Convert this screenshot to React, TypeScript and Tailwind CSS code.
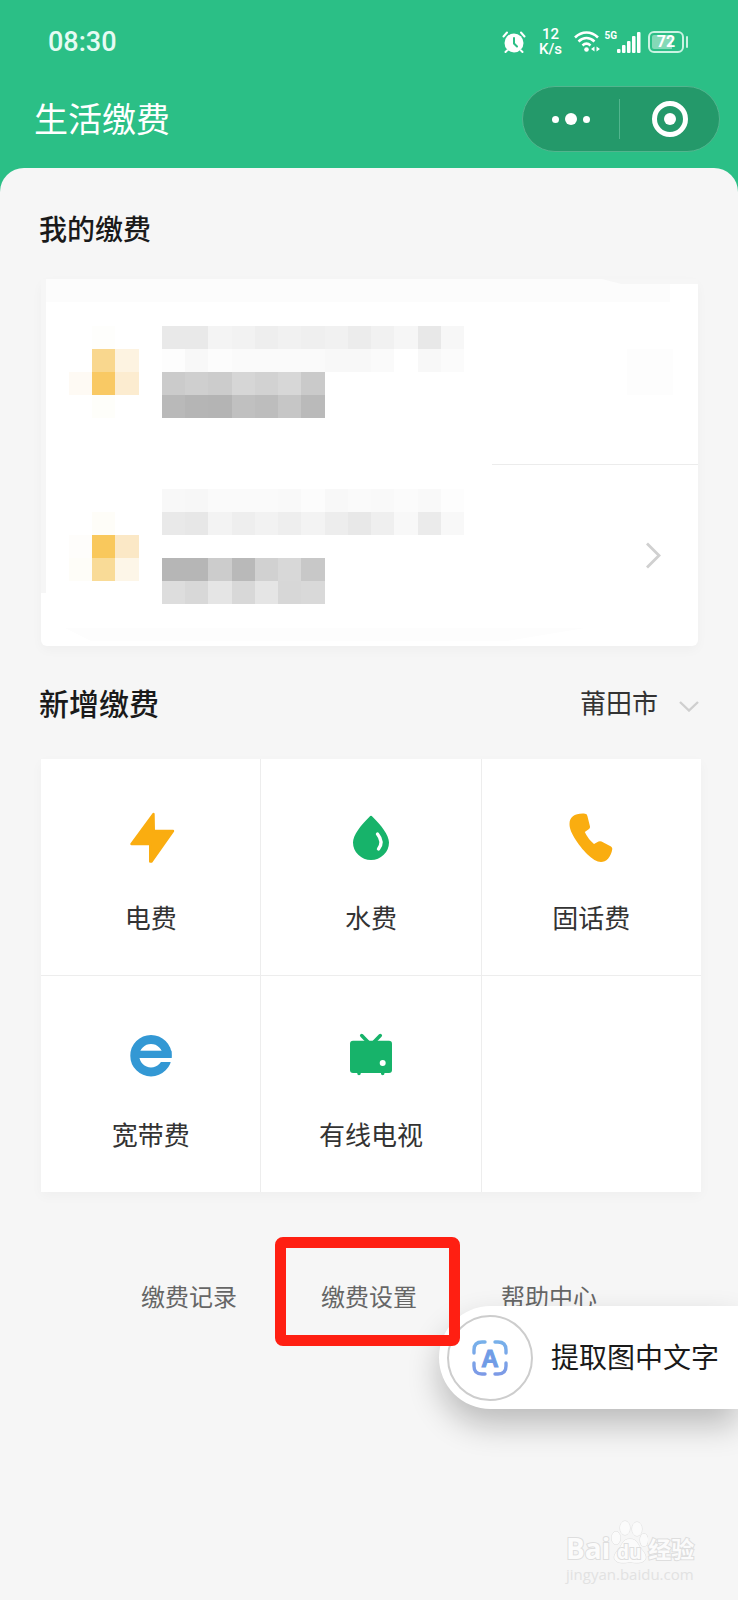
import type { ReactNode } from 'react';

// one string per mosaic cell: 3 icon cells, 1 spacer, 13 text cells
const firstAccount = [
  ['', 'bg-[#fefefc]', '', '', 'bg-[#e9e9e9]', 'bg-[#e9e9e9]', 'bg-[#f4f4f4]', 'bg-[#f2f2f2]', 'bg-[#eeeeee]', 'bg-[#f1f1f1]', 'bg-[#efefef]', 'bg-[#f1f1f1]', 'bg-[#ececec]', 'bg-[#f1f1f1]', 'bg-[#f6f6f6]', 'bg-[#e8e8e8]', 'bg-[#f7f7f7]'],
  ['', 'bg-[#f9d78e]', 'bg-[#fdf3e1]', '', 'bg-[#fdfdfd]', 'bg-[#f8f8f8]', 'bg-[#fcfcfc]', 'bg-[#fafafa]', 'bg-[#fafafa]', 'bg-[#fafafa]', 'bg-[#fafafa]', 'bg-[#f8f8f8]', 'bg-[#f8f8f8]', 'bg-[#fafafa]', '', 'bg-[#f8f8f8]', 'bg-[#fbfbfb]'],
  ['bg-[#fefaf4]', 'bg-[#f9c964]', 'bg-[#fcecd0]', '', 'bg-[#cbcbcb]', 'bg-[#cfcfcf]', 'bg-[#cccccc]', 'bg-[#d6d6d6]', 'bg-[#d2d2d2]', 'bg-[#d7d7d7]', 'bg-[#cacaca]', '', '', '', '', '', ''],
  ['', 'bg-[#fefefa]', '', '', 'bg-[#b9b9b9]', 'bg-[#b5b5b5]', 'bg-[#b4b4b4]', 'bg-[#c0c0c0]', 'bg-[#bdbdbd]', 'bg-[#c6c6c6]', 'bg-[#bababa]', '', '', '', '', '', ''],
];

const secondAccount = [
  ['', '', '', '', 'bg-[#f8f8f8]', 'bg-[#f7f7f7]', 'bg-[#fafafa]', 'bg-[#fafafa]', 'bg-[#fafafa]', 'bg-[#f9f9f9]', 'bg-[#fcfcfc]', 'bg-[#f8f8f8]', 'bg-[#fafafa]', 'bg-[#f9f9f9]', 'bg-[#fbfbfb]', 'bg-[#f9f9f9]', 'bg-[#fdfdfd]'],
  ['', 'bg-[#fefdf8]', '', '', 'bg-[#e9e9e9]', 'bg-[#e7e7e7]', 'bg-[#f3f3f3]', 'bg-[#eeeeee]', 'bg-[#f2f2f2]', 'bg-[#eeeeee]', 'bg-[#f3f3f3]', 'bg-[#ededed]', 'bg-[#e8e8e8]', 'bg-[#efefef]', 'bg-[#f8f8f8]', 'bg-[#ebebeb]', 'bg-[#f8f8f8]'],
  ['bg-[#fefdfb]', 'bg-[#f9c85c]', 'bg-[#fbe8c6]', '', '', '', '', '', '', '', '', '', '', '', '', '', ''],
  ['bg-[#fefdf8]', 'bg-[#f9db97]', 'bg-[#fdf6e8]', '', 'bg-[#b6b6b6]', 'bg-[#b6b6b6]', 'bg-[#cccccc]', 'bg-[#b9b9b9]', 'bg-[#d1d1d1]', 'bg-[#d8d8d8]', 'bg-[#c8c8c8]', '', '', '', '', '', ''],
  ['', '', '', '', 'bg-[#dddddd]', 'bg-[#d8d8d8]', 'bg-[#e5e5e5]', 'bg-[#d8d8d8]', 'bg-[#e5e5e5]', 'bg-[#d7d7d7]', 'bg-[#d9d9d9]', '', '', '', '', '', ''],
];

function Mosaic({ rows }: { rows: string[][] }) {
  return (
    <div className="w-[395px]">
      {rows.map((row, i) => (
        <div key={i} className="flex h-[23px]">
          {row.map((color, j) => (
            <div key={j} className={`flex-1 ${color}`} />
          ))}
        </div>
      ))}
    </div>
  );
}

function StatusIcons() {
  return (
    <div className="flex items-center text-white">
      {/* Alarm */}
      <svg width="24" height="24" viewBox="0 0 24 24" fill="none" stroke="currentColor" strokeLinecap="round">
        <circle cx="12" cy="13" r="9.500" fill="currentColor" stroke="none" />
        <path d="M1.500 6.500 5 2.500M22.500 6.500 19 2.500" strokeWidth="2" />
        <path d="M5 20.500 3.500 22M19 20.500l1.500 1.500" strokeWidth="2" />
        <path d="M12 8v5.500l3 3" stroke="#2bbf86" strokeWidth="2" />
      </svg>

      {/* Network speed */}
      <div className="ml-3 w-6 text-center font-['Roboto'] text-[15px] leading-[15px] font-medium">
        12<br />K/s
      </div>

      {/* Wifi */}
      <svg className="ml-3" width="26" height="24" viewBox="0 0 26 24" fill="none" stroke="currentColor" strokeWidth="2.600">
        <path d="M1 7.500C8 .8 17 .8 24 7.500M4.500 11.500C9.500 7 15.500 7 20.500 11.500M8.500 15.500C11 13.200 14 13.200 16.500 15.500" />
        <circle cx="12.500" cy="19.500" r="2.300" fill="currentColor" stroke="none" />
        <path d="M17 19l3.500-2.500v5zM26 19l-3.500-2.500v5z" fill="currentColor" stroke="none" />
      </svg>

      {/* Signal */}
      <div className="ml-1 h-6 font-['Roboto'] text-[10px] leading-3 font-bold">5G</div>
      <svg width="24" height="24" viewBox="0 0 24 24" fill="currentColor">
        <rect x="0" y="19" width="3.500" height="4" rx="1" />
        <rect x="5" y="15" width="3.500" height="8" rx="1" />
        <rect x="10" y="11" width="3.500" height="12" rx="1" />
        <rect x="15" y="6" width="3.500" height="17" rx="1" />
        <rect x="20" y="2" width="3.500" height="21" rx="1" />
      </svg>

      {/* Battery */}
      <div className="ml-[7px] flex h-[22px] w-9 items-center justify-center rounded-md border-2 border-[#c9f3e2] bg-linear-to-r from-[#84d9b7] from-70% to-[#2bbf86] to-70% bg-clip-content p-[2px]">
        <span className="font-['Roboto'] text-[16px] leading-4 font-bold">72</span>
      </div>
      <div className="ml-[2px] h-3 w-[2px] rounded-full bg-[#c9f3e2]" />
    </div>
  );
}

function BoltIcon() {
  return (
    <svg width="52" height="52" viewBox="0 0 52 52" fill="#faad10" stroke="#faad10" strokeWidth="2.400" strokeLinejoin="round">
      <path d="M28.500 2 28.800 19H48L26.500 49.500H25.200V32H6.500Z" />
    </svg>
  );
}

function DropIcon() {
  return (
    <svg width="52" height="52" viewBox="0 0 52 52" fill="none">
      <path d="M24.500 4.700Q26 3 27.500 4.700C36 13 44 23 44 30.500A18 17.500 0 0 1 8 30.500C8 23 16 13 24.500 4.700Z" fill="#17b36a" />
      <path d="M32.500 22Q39 30 33.500 37" stroke="#fff" strokeWidth="3.400" strokeLinecap="round" />
    </svg>
  );
}

function PhoneIcon() {
  return (
    <svg width="52" height="52" viewBox="0 0 52 52" fill="#faad10">
      <path d="M4.500 12C4.500 5 10 1 20 1.700Q22 1.800 22.400 4L25 14.500Q25.200 16 24 17L19.800 20Q23 27 29 32L33.500 29.500Q35 29 36.500 29.500L46 34.500Q47.500 35.500 47.300 37C46 45.500 41 50 36 50 28 50 17 38 9.500 26 6 20 4.500 16 4.500 12Z" />
    </svg>
  );
}

function BroadbandIcon() {
  return (
    <svg width="52" height="52" viewBox="0 0 52 52" fill="none">
      <circle cx="26" cy="26.700" r="16.200" stroke="#3398d4" strokeWidth="9" />
      <rect x="12" y="21.700" width="34.500" height="7.300" fill="#3398d4" />
      <rect x="30" y="29" width="19" height="4" fill="#fff" />
    </svg>
  );
}

function TvIcon() {
  return (
    <svg width="52" height="52" viewBox="0 0 52 52" fill="none" stroke="#17b36a" strokeWidth="3.500" strokeLinecap="round">
      <rect x="5" y="11.700" width="42" height="32.300" rx="3" fill="#17b36a" stroke="none" />
      <path d="M16.700 6.500 23 13M35.300 6.500 29 13M14 43v1.500M37.700 43v1.500" />
      <circle cx="37.700" cy="34" r="3" fill="#fff" stroke="none" />
    </svg>
  );
}

function ServiceCell({ icon, label }: { icon: ReactNode; label: string }) {
  return (
    <button type="button" className="flex h-54 flex-col items-center bg-white pt-[53px] text-[#333]">
      {icon}
      <span className="mt-[35px] text-[26px] leading-9">{label}</span>
    </button>
  );
}

export default function App() {
  return (
    <div className="relative flex min-h-screen flex-col overflow-hidden bg-[#2bbf86] font-['Noto_Sans_CJK_SC',sans-serif]">

      {/* Status bar */}
      <div className="flex h-[84px] items-center justify-between pr-[50px] pl-12">
        <span className="font-['Roboto'] text-[27px] font-medium text-[#e6fbf3]">08:30</span>
        <StatusIcons />
      </div>

      {/* Title bar */}
      <header className="flex h-[84px] items-start justify-between pt-[2px] pr-[18px] pl-[34px]">
        <h1 className="text-[34px] leading-16 text-white">生活缴费</h1>
        <div className="flex h-[66px] w-[198px] items-center rounded-full border border-[#52b58e] bg-[#24996a]">
          <button type="button" aria-label="更多" className="flex w-24 items-center justify-center gap-[6px]">
            <span className="size-[7px] rounded-full bg-white" />
            <span className="size-3 rounded-full bg-white" />
            <span className="size-[7px] rounded-full bg-white" />
          </button>
          <div className="h-10 w-px bg-[#52b58e]" />
          <button type="button" aria-label="关闭" className="flex flex-1 justify-center">
            <span className="flex size-9 items-center justify-center rounded-full border-5 border-white">
              <span className="size-3 rounded-full bg-white" />
            </span>
          </button>
        </div>
      </header>

      <main className="flex flex-1 flex-col rounded-t-3xl bg-[#f6f6f6] pt-10">

        {/* My payments */}
        <h2 className="pl-[39px] text-[28px] leading-10 font-medium text-[#1a1a1a]">我的缴费</h2>
        <div className="relative mt-[31px] mr-10 ml-[41px] rounded-md bg-white shadow-[0_4px_12px_rgba(0,0,0,0.03)]">
          {/* Smudged edges of the card */}
          <div className="absolute top-0 left-0 h-[314px] w-[5px] bg-[#f6f6f6]" />
          <div className="absolute top-0 right-7 left-[5px] h-[23px] bg-[#fcfcfc]" />
          <div className="absolute top-0 right-0 h-[5px] w-24 bg-[#f6f6f6] [clip-path:polygon(0_0,100%_0,100%_100%,20%_100%)]" />
          <div className="absolute bottom-[5px] left-6 h-[13px] w-[520px] bg-[#fdfdfd] [clip-path:polygon(0_0,100%_0,85%_100%,5%_100%)]" />

          <div className="relative flex h-[185px] items-start justify-between pt-[47px] pr-[25px] pl-7">
            <Mosaic rows={firstAccount} />
            <div className="mt-[23px] size-[46px] bg-[#fdfdfd]" />
          </div>
          <div className="ml-auto h-px w-[206px] bg-[#ececec]" />
          <button type="button" aria-label="查看缴费详情" className="relative flex h-[181px] w-full items-start justify-between pt-6 pr-9 pl-7">
            <Mosaic rows={secondAccount} />
            <svg className="mt-[52px]" width="18" height="28" viewBox="0 0 18 28" fill="none" stroke="#d0d0d0" strokeWidth="2.800">
              <path d="M3 2.500 15 14.500 3 26.500" />
            </svg>
          </button>
        </div>

        {/* Add a payment */}
        <div className="mt-9 flex h-10 items-center justify-between pr-[39px] pl-[39px]">
          <h2 className="text-[30px] leading-10 font-medium text-[#1a1a1a]">新增缴费</h2>
          <div className="flex items-center gap-5">
            <select aria-label="城市" className="appearance-none bg-transparent text-[26px] leading-10 text-[#333]">
              <option>莆田市</option>
            </select>
            <svg className="mt-2" width="20" height="12" viewBox="0 0 20 12" fill="none" stroke="#cfcfcf" strokeWidth="2.400">
              <path d="M1 2 10 10.500 19 2" />
            </svg>
          </div>
        </div>
        <div className="mt-[37px] mr-[37px] ml-[41px] grid grid-cols-3 gap-px bg-[#ededed] shadow-[0_4px_12px_rgba(0,0,0,0.03)]">
          <ServiceCell icon={<BoltIcon />} label="电费" />
          <ServiceCell icon={<DropIcon />} label="水费" />
          <ServiceCell icon={<PhoneIcon />} label="固话费" />
          <ServiceCell icon={<BroadbandIcon />} label="宽带费" />
          <ServiceCell icon={<TvIcon />} label="有线电视" />
          <div className="bg-white" />
        </div>

        {/* Links */}
        <nav className="mt-[86px] flex justify-center gap-[84px] text-[24px] leading-9 text-[#666]">
          <a href="#records">缴费记录</a>
          <a href="#settings" className="relative">
            缴费设置
            <span className="absolute -top-[41px] -right-[43px] -bottom-8 -left-[46px] z-20 rounded-lg border-[11px] border-[#ff1f12]" />
          </a>
          <a href="#help">帮助中心</a>
        </nav>

        {/* Watermark */}
        <div className="mt-auto mr-10 mb-4 w-[132px] self-end">
          <div className="flex items-end leading-8 font-bold text-[#fbfbfb] [paint-order:stroke_fill] [-webkit-text-stroke:2px_#dedede]">
            <span className="font-['Open_Sans'] text-[28px]">Bai</span>
            <div className="relative h-11 w-[38px]">
              <svg width="38" height="44" viewBox="0 0 38 44" fill="#fbfbfb" stroke="#dedede" strokeWidth="1">
                <ellipse cx="6" cy="18" rx="4.500" ry="6.500" />
                <ellipse cx="15" cy="8" rx="5" ry="7" />
                <ellipse cx="27" cy="9" rx="5" ry="7" />
                <ellipse cx="34" cy="20" rx="4" ry="6.500" />
                <path d="M20 19C28 19 27 25 33 31 40 40 33 45 20 42 7 45 0 40 7 31 13 25 12 19 20 19Z" />
              </svg>
              <span className="absolute right-0 bottom-0 left-0 text-center font-['Open_Sans'] text-[19px] leading-6">du</span>
            </div>
            <span className="text-[23px]">经验</span>
          </div>
          <div className="font-['Open_Sans'] text-[15px] leading-5 text-[#e2e2e2]">jingyan.baidu.com</div>
        </div>
      </main>

      {/* Floating text extraction button */}
      <button type="button" className="absolute top-[1306px] right-0 z-10 flex h-[103px] w-[299px] items-center rounded-l-full bg-white pl-2 shadow-[0_16px_32px_rgba(0,0,0,0.24)]">
        <span className="flex size-[86px] items-center justify-center rounded-full border-2 border-[#cdcdcd]">
          <svg width="36" height="36" viewBox="0 0 36 36" fill="none">
            <defs>
              <linearGradient id="scan" x1="0" y1="0" x2="0" y2="36" gradientUnits="userSpaceOnUse">
                <stop stopColor="#77b1ea" />
                <stop offset="1" stopColor="#7d99e6" />
              </linearGradient>
            </defs>
            <path d="M2 13V10Q2 2 10 2H13M23 2H26Q34 2 34 10V13M34 23V26Q34 34 26 34H23M13 34H10Q2 34 2 26V23" stroke="url(#scan)" strokeWidth="3.400" strokeLinecap="round" />
            <text x="18" y="26.500" textAnchor="middle" fill="#709ce6" stroke="#709ce6" strokeWidth="1" className="font-['Liberation_Sans'] text-[24px] font-bold">A</text>
          </svg>
        </span>
        <span className="ml-[18px] pb-1 text-[28px] leading-10 text-[#1a1a1a]">提取图中文字</span>
      </button>
    </div>
  );
}
